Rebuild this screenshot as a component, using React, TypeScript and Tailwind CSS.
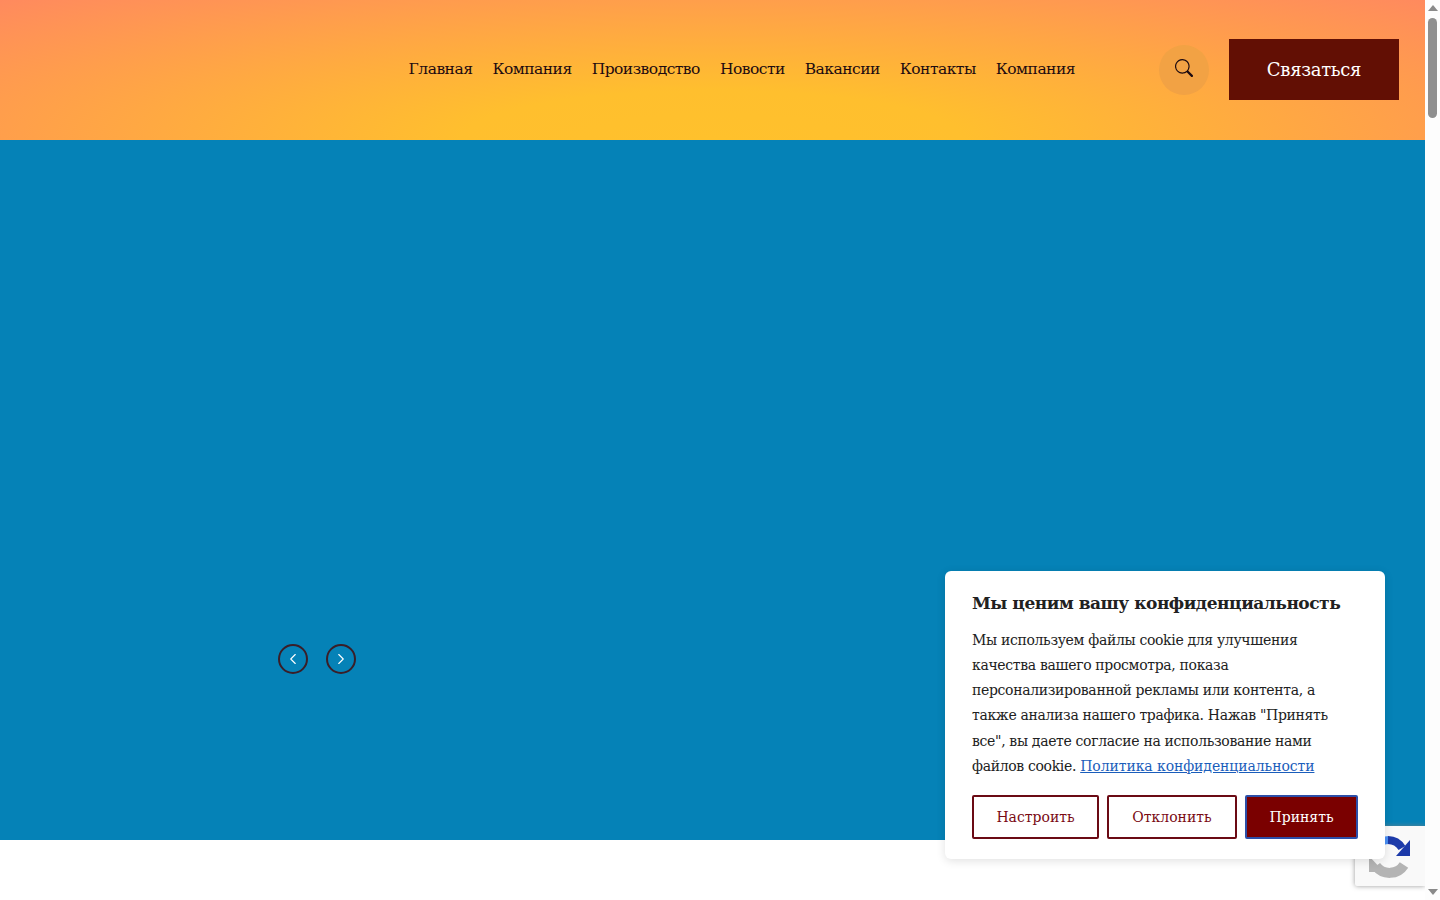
import React from 'react';
import { ChevronLeft, ChevronRight } from 'lucide-react';
import { BsSearch } from 'react-icons/bs';

const navItems = ['Главная', 'Компания', 'Производство', 'Новости', 'Вакансии', 'Контакты', 'Компания'];

const Captcha = () => (
  <svg width="44" height="44" viewBox="0 0 44 44" className="ml-3 mt-2">
    <path d="M4 24 A18 18 0 0 1 22 6" fill="none" stroke="#4a90f5" strokeWidth="8" />
    <path d="M21 6 A17 17 0 0 1 35 14" fill="none" stroke="#1c3aa9" strokeWidth="8" />
    <polygon points="43,6 43,22 29,22" fill="#1c3aa9" />
    <path d="M37 31 A17 17 0 0 1 9 32" fill="none" stroke="#b4b4b4" strokeWidth="10" />
    <polygon points="2,22 2,38 17,38" fill="#b4b4b4" />
  </svg>
);

const App: React.FC = () => {
  return (
    <div className="flex h-screen w-full overflow-hidden bg-white font-['DejaVu_Serif',serif]">
      <main className="relative flex-1 overflow-hidden">
        <header className="flex h-[140px] items-center justify-end pb-[1px] pr-[26px] bg-[radial-gradient(ellipse_at_50%_100%,#ffc12c_0%,#ffbf2e_25%,#ff8a5e_100%)]">
          <nav className="mr-[84px] flex gap-5 text-[15.5px] tracking-[-0.52px] text-[#1d0a10]">
            {navItems.map((item, i) => (
              <a key={i} href="#" className="whitespace-nowrap">{item}</a>
            ))}
          </nav>
          <button className="mr-5 flex h-[50px] w-[50px] items-center justify-center rounded-full bg-[#f2a244] text-[#1d0a10]">
            <BsSearch size={18} className="-translate-y-[2px]" />
          </button>
          <button className="h-[61px] w-[170px] bg-[#620f04] text-[18px] tracking-[-0.3px] text-white">Связаться</button>
        </header>

        <section className="h-[700px] bg-[#0582b7] pl-[278px] pt-[504px]">
          <div className="flex gap-[18px]">
            <button className="flex h-[30px] w-[30px] items-center justify-center rounded-full border-2 border-[#3a1e28] text-white">
              <ChevronLeft size={18} strokeWidth={1.5} />
            </button>
            <button className="flex h-[30px] w-[30px] items-center justify-center rounded-full border-2 border-[#3a1e28] text-white">
              <ChevronRight size={18} strokeWidth={1.5} />
            </button>
          </div>
        </section>

        {/* recaptcha */}
        <div className="absolute left-[1355px] top-[826px] h-[60px] w-[70px] rounded-l-[2px] bg-[#f9f9f9] shadow-[0_0_5px_rgba(128,128,128,0.8)]">
          <Captcha />
        </div>

        {/* cookie */}
        <div className="absolute left-[945px] top-[571px] h-[288px] w-[440px] rounded-md bg-white px-[27px] pt-[19px] text-[#212121] shadow-[0_2px_10px_rgba(0,0,0,0.12)]">
          <h2 className="whitespace-nowrap text-[17px] font-bold leading-[26px] tracking-[-0.47px]">Мы ценим вашу конфиденциальность</h2>
          <p className="mt-[11.7px] whitespace-nowrap text-[14px] leading-[25.2px] tracking-[-0.33px]">
            Мы используем файлы cookie для улучшения<br />
            качества вашего просмотра, показа<br />
            персонализированной рекламы или контента, а<br />
            также анализа нашего трафика. Нажав "Принять<br />
            все", вы даете согласие на использование нами<br />
            файлов cookie.{' '}
            <a href="#" className="tracking-[-0.08px] text-[#1a5dbb] underline">Политика конфиденциальности</a>
          </p>
          <div className="mt-[16px] flex gap-2 text-[14px]">
            <button className="h-[44px] w-[127px] rounded-[2px] border-2 border-[#6b0a14] pt-[2px] text-[#7a0a14]">Настроить</button>
            <button className="h-[44px] w-[130px] rounded-[2px] border-2 border-[#6b0a14] pt-[2px] text-[#7a0a14]">Отклонить</button>
            <button className="h-[44px] w-[113px] rounded-[2px] border-2 border-[#2c4fa8] bg-[#7a0000] pt-[2px] text-white">Принять</button>
          </div>
        </div>
      </main>

      {/* scrollbar */}
      <aside className="flex w-[15px] flex-col items-center justify-between bg-[#fdfdfd] py-[5px]">
        <div className="flex flex-col items-center gap-[7px]">
          <div className="h-0 w-0 border-x-[5px] border-b-[6px] border-x-transparent border-b-[#8a8a8a]" />
          <div className="h-[100px] w-[9px] rounded-full bg-[#8f8f8f]" />
        </div>
        <div className="h-0 w-0 border-x-[5px] border-t-[6px] border-x-transparent border-t-[#8a8a8a]" />
      </aside>
    </div>
  );
};

export default App;
